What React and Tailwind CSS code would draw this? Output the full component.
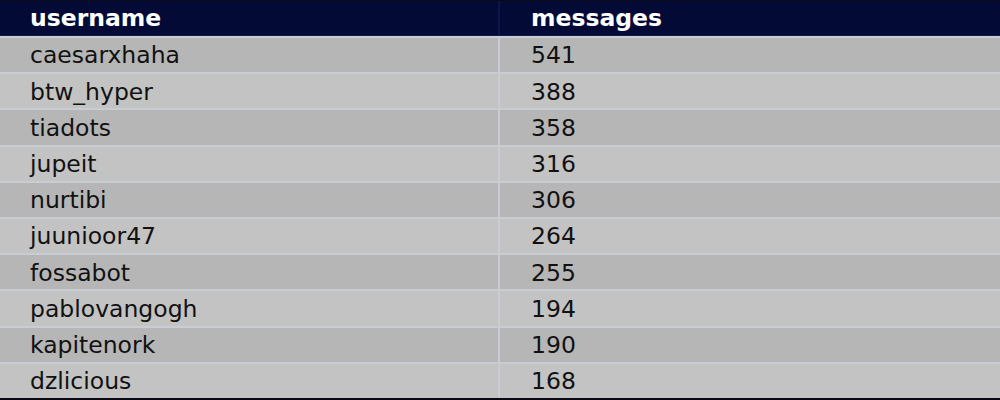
const rows = [
  ["caesarxhaha", 541],
  ["btw_hyper", 388],
  ["tiadots", 358],
  ["jupeit", 316],
  ["nurtibi", 306],
  ["juunioor47", 264],
  ["fossabot", 255],
  ["pablovangogh", 194],
  ["kapitenork", 190],
  ["dzlicious", 168],
];

export default function App() {
  return (
    <div
      className="w-[1000px] h-[400px] overflow-hidden bg-[#c9ccd2] border-t border-b-2 border-[#0a0a14]"
      style={{ fontFamily: '"DejaVu Sans", sans-serif' }}
    >
      {/* header */}
      <div className="grid grid-cols-[498px_1fr] gap-x-[2px] bg-[#0d1648] border-b border-[#101b52]">
        <div className="h-[34px] bg-[#030a36] pl-[30px] pt-[1px] flex items-center text-white font-bold text-[23.5px]">
          username
        </div>
        <div className="h-[34px] bg-[#030a36] pl-[31px] pt-[1px] flex items-center text-white font-bold text-[23.5px]">
          messages
        </div>
      </div>
      {/* body */}
      <div className="flex flex-col gap-[2px] pt-[2px]">
        {rows.map(([name, count], i) => (
          <div key={name} className="grid grid-cols-[498px_1fr] gap-x-[2px]">
            <div
              className={`h-[34.2px] pl-[30px] pt-[2px] flex items-center text-[23.5px] text-[#111] ${
                i % 2 === 0 ? "bg-[#b6b6b6]" : "bg-[#c3c3c3]"
              }`}
            >
              {name}
            </div>
            <div
              className={`h-[34.2px] pl-[31px] pt-[2px] flex items-center text-[23.5px] text-[#111] ${
                i % 2 === 0 ? "bg-[#b6b6b6]" : "bg-[#c3c3c3]"
              }`}
            >
              {count}
            </div>
          </div>
        ))}
      </div>
    </div>
  );
}
